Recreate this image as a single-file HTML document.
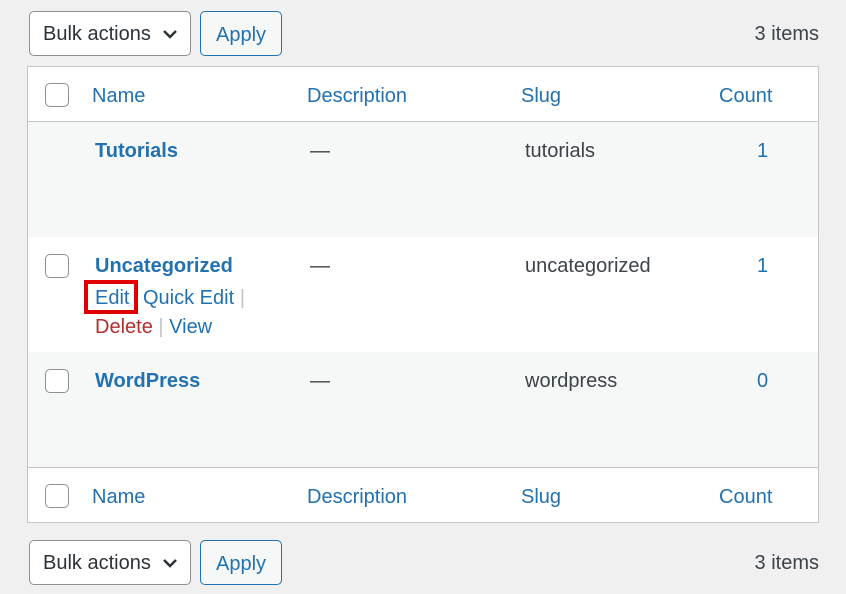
<!DOCTYPE html>
<html><head><style>
*{box-sizing:border-box;margin:0;padding:0}
body{width:846px;height:594px;background:#f0f0f1;font-family:"Liberation Sans",sans-serif;font-size:20px;color:#3c434a;position:relative;overflow:hidden}
.abs{position:absolute;white-space:nowrap}
.sel{left:29px;width:162px;height:45px;border:1px solid #8c8f94;border-radius:5px;background:#fff;color:#2c3338;padding:11px 0 0 13px}
.sel svg{position:absolute;right:12px;top:17px}
.btn{left:200px;width:82px;height:45px;border:1px solid #2271b1;border-radius:5px;background:#f6f7f7;color:#2271b1;text-align:center;padding-top:12px}
.items{right:27px}
.tbl{left:27px;top:66px;width:792px;height:457px;border:1px solid #c3c4c7;background:#fff}
.row{position:absolute;left:0;width:790px}
.cb{position:absolute;left:17px;width:24px;height:24px;border:1px solid #8c8f94;border-radius:5px;background:#fff}
.h{color:#2271b1}
.b{font-weight:bold;color:#2271b1}
a{color:#2271b1;text-decoration:none}
.sep{color:#c3c4c7}
</style></head><body>
<div class="abs sel" style="top:11px">Bulk actions<svg width="16" height="10" viewBox="0 0 16 10"><path d="M2 2l6 6 6-6" stroke="#2c3338" stroke-width="2.5" fill="none"/></svg></div>
<div class="abs btn" style="top:11px">Apply</div>
<div class="abs items" style="top:23px">3 items</div>
<div class="abs tbl">
 <div class="row" style="top:0;height:55px;border-bottom:1px solid #c3c4c7">
  <div class="cb" style="top:16px"></div>
  <span class="abs h" style="left:64px;top:18px">Name</span>
  <span class="abs h" style="left:279px;top:18px">Description</span>
  <span class="abs h" style="left:493px;top:18px">Slug</span>
  <span class="abs h" style="left:691px;top:18px">Count</span>
 </div>
 <div class="row" style="top:55px;height:115px;background:#f6f7f7">
  <span class="abs b" style="left:67px;top:18px">Tutorials</span>
  <span class="abs" style="left:282px;top:18px">—</span>
  <span class="abs" style="left:497px;top:18px">tutorials</span>
  <span class="abs" style="left:729px;top:18px;color:#2271b1">1</span>
 </div>
 <div class="row" style="top:170px;height:115px;background:#fff">
  <div class="cb" style="top:17px"></div>
  <span class="abs b" style="left:67px;top:18px">Uncategorized</span>
  <span class="abs" style="left:282px;top:18px">—</span>
  <span class="abs" style="left:497px;top:18px">uncategorized</span>
  <span class="abs" style="left:729px;top:18px;color:#2271b1">1</span>
  <div class="abs" style="left:56px;top:43px;width:54px;height:34px;border:4px solid #e00000"></div>
  <a class="abs" style="left:67px;top:50px">Edit</a>
  <span class="abs" style="left:115px;top:50px"><a>Quick Edit</a> <span class="sep">|</span></span>
  <span class="abs" style="left:67px;top:79px"><a style="color:#b32d2e">Delete</a> <span class="sep">|</span> <a>View</a></span>
 </div>
 <div class="row" style="top:285px;height:115px;background:#f6f7f7">
  <div class="cb" style="top:17px"></div>
  <span class="abs b" style="left:67px;top:18px">WordPress</span>
  <span class="abs" style="left:282px;top:18px">—</span>
  <span class="abs" style="left:497px;top:18px">wordpress</span>
  <span class="abs" style="left:729px;top:18px;color:#2271b1">0</span>
 </div>
 <div class="row" style="top:400px;height:55px;border-top:1px solid #c3c4c7">
  <div class="cb" style="top:16px"></div>
  <span class="abs h" style="left:64px;top:18px">Name</span>
  <span class="abs h" style="left:279px;top:18px">Description</span>
  <span class="abs h" style="left:493px;top:18px">Slug</span>
  <span class="abs h" style="left:691px;top:18px">Count</span>
 </div>
</div>
<div class="abs sel" style="top:540px">Bulk actions<svg width="16" height="10" viewBox="0 0 16 10"><path d="M2 2l6 6 6-6" stroke="#2c3338" stroke-width="2.5" fill="none"/></svg></div>
<div class="abs btn" style="top:540px">Apply</div>
<div class="abs items" style="top:552px">3 items</div>
</body></html>
